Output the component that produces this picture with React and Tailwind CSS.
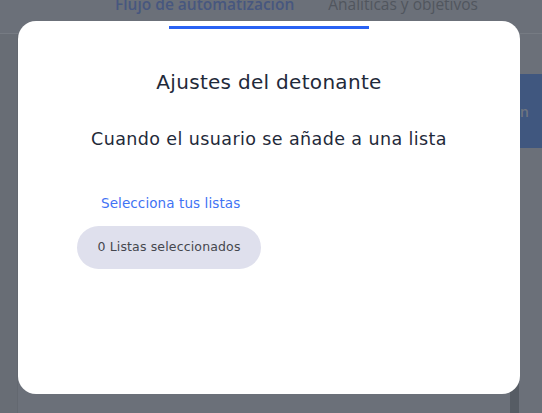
export default function App() {
  return (
    <div className="relative w-[542px] h-[413px] overflow-hidden bg-[#6b7079] font-['Open_Sans',sans-serif]">
      {/* Page behind the overlay */}
      <div className="flex flex-col h-full">
        <div className="h-[34px] border-b border-[#767b83] flex items-start pl-[115px] gap-[34px]">
          <span className="-mt-[7px] text-[15.5px] font-semibold text-[#47577f]">Flujo de automatización</span>
          <span className="-mt-[7px] text-[15.5px] text-[#51565e]">Analíticas y objetivos</span>
        </div>
        <div className="flex flex-1">
          <div className="w-[18px] bg-[#686d75] border-r border-[#636870]"></div>
          <div className="flex-1"></div>
          <div className="w-[9px] bg-[#565c64]"></div>
          <div className="w-[23px] pt-[40px]">
            <div className="h-[74px] bg-[#40577f] flex items-center pl-[1px]">
              <span className="text-[14px] font-semibold text-[#6f7580]">n</span>
            </div>
          </div>
        </div>
      </div>

      {/* Modal */}
      <div className="absolute left-[18px] top-[21px] w-[502px] h-[373px] bg-white rounded-[18px] flex flex-col items-center font-['DejaVu_Sans',sans-serif]">
        <div className="mt-[5px] w-[200px] h-[3px] bg-[#2962f4]"></div>
        <h2 className="mt-[38px] text-[20px] tracking-[0.3px] text-[#1f2a3a]">Ajustes del detonante</h2>
        <h3 className="mt-[29px] text-[17.5px] tracking-[0.4px] text-[#1f2a3a]">Cuando el usuario se añade a una lista</h3>
        <div className="self-stretch pl-[59px] mt-[41px] flex flex-col items-start">
          <span className="ml-[24px] text-[13.5px] tracking-[0.1px] text-[#3f73f4]">Selecciona tus listas</span>
          <div className="mt-[12px] h-[43px] w-[184px] rounded-full bg-[#dfe0ed] flex items-center justify-center text-[12.5px] tracking-[0.15px] text-[#45474e]">
            0 Listas seleccionados
          </div>
        </div>
      </div>
    </div>
  );
}
